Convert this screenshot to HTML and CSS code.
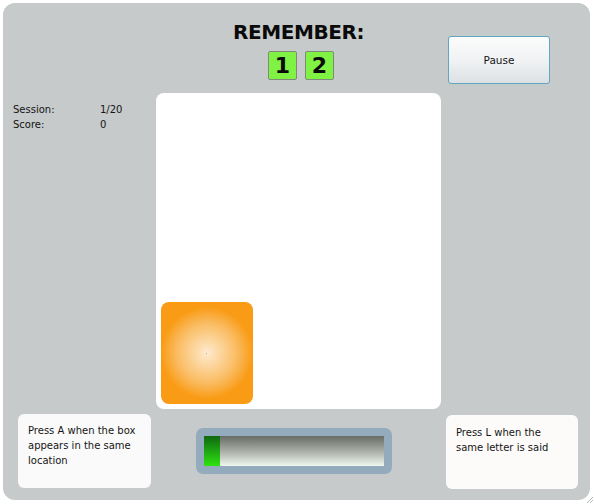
FILE: index.html
```html
<!DOCTYPE html>
<html>
<head>
<meta charset="utf-8">
<link rel="stylesheet" href="styles.css">
</head>
<body>
<div class="panel">
  <div class="left-head"></div>
  <div class="center-head">
    <div class="title">REMEMBER:</div>
    <div class="numbers">
      <div class="num">1</div>
      <div class="num">2</div>
    </div>
  </div>
  <div class="right-head">
    <button class="pause">Pause</button>
  </div>

  <div class="stats">
    <div class="stat"><span class="stat-label">Session:</span><span>1/20</span></div>
    <div class="stat"><span class="stat-label">Score:</span><span>0</span></div>
  </div>
  <div class="board">
    <div class="cell-active"><span class="dot"></span></div>
  </div>
  <div class="right-mid"></div>

  <div class="foot-left">
    <div class="hint hint-a">Press A when the box appears in the same location</div>
  </div>
  <div class="foot-center">
    <div class="meter">
      <div class="meter-track">
        <div class="meter-fill"></div>
      </div>
    </div>
  </div>
  <div class="foot-right">
    <div class="hint hint-l">Press L when the same letter is said</div>
  </div>
</div>
<svg class="grip" width="8" height="8" viewBox="0 0 8 8">
  <path d="M7 1 L1 7 M7 4 L4 7" stroke="#a0a4a6" stroke-width="0.8" fill="none"/>
</svg>
</body>
</html>
```

FILE: styles.css
```css
html, body {
  margin: 0;
  padding: 0;
  background: #ffffff;
}

body {
  font-family: "DejaVu Sans", Verdana, sans-serif;
  color: #151515;
  width: 594px;
  height: 504px;
  overflow: hidden;
}

.panel {
  margin: 3px;
  width: 587px;
  height: 497px;
  background: #c6cacb;
  border-radius: 12px;
  display: grid;
  grid-template-columns: 153px 285px 149px;
  grid-template-rows: 90px 316px 91px;
}

.center-head {
  display: flex;
  flex-direction: column;
  align-items: center;
  padding-top: 17px;
}

.title {
  font-weight: bold;
  font-size: 20px;
  line-height: 24px;
  letter-spacing: -0.4px;
  color: #0a0a0a;
}

.numbers {
  display: flex;
  gap: 8px;
  margin-top: 7px;
  padding-left: 5px;
}

.num {
  width: 27px;
  height: 27px;
  border: 1px solid #7f8a7a;
  border-radius: 2px;
  background: #80f243;
  font-weight: bold;
  font-size: 22px;
  line-height: 27px;
  text-align: center;
  color: #0a0a0a;
}

.right-head {
  padding-top: 33px;
  padding-left: 7px;
}

.pause {
  width: 102px;
  height: 48px;
  border: 1px solid #5ea9bf;
  border-radius: 3px;
  background: linear-gradient(to bottom, #fcfcfc 0%, #f0f2f3 50%, #dde1e4 100%);
  font-family: "DejaVu Sans", Verdana, sans-serif;
  font-size: 10.5px;
  color: #151515;
  padding: 0;
  margin: 0;
}

.stats {
  padding-top: 9px;
  padding-left: 10px;
  font-size: 10px;
  line-height: 15px;
}

.stat {
  display: flex;
}

.stat-label {
  width: 87px;
}

.board {
  background: #ffffff;
  border-radius: 8px;
  padding: 5px;
  display: grid;
  grid-template-columns: repeat(3, 1fr);
  grid-template-rows: repeat(3, 1fr);
}

.cell-active {
  grid-column: 1;
  grid-row: 3;
  border-radius: 8px;
  background: radial-gradient(circle closest-side, #fdeacf 0%, #fcd59c 30%, #fabc62 65%, #f99b14 100%);
  display: flex;
  align-items: center;
  justify-content: center;
}

.dot {
  width: 1px;
  height: 1px;
  background: #b0aaa2;
}

.hint {
  font-size: 10px;
  line-height: 15px;
  border-radius: 6px;
  box-sizing: border-box;
  height: 74px;
  color: #151515;
}

.hint-a {
  margin-top: 5px;
  margin-left: 15px;
  width: 133px;
  background: #fafafa;
  padding: 9px 10px 0 10px;
}

.hint-l {
  margin-top: 6px;
  margin-left: 5px;
  width: 132px;
  background: #fcfbfa;
  padding: 10px 10px 0 10px;
}

.foot-center {
  padding-top: 19px;
  padding-left: 40px;
}

.meter {
  width: 196px;
  height: 46px;
  box-sizing: border-box;
  padding: 8px;
  background: #94abbe;
  border-radius: 7px;
}

.meter-track {
  height: 30px;
  background: linear-gradient(to bottom, #676c65 0%, #a9ada5 50%, #f0f8ee 100%);
  display: flex;
}

.meter-fill {
  width: 16px;
  background: linear-gradient(to bottom, #0f680f 0%, #1fa513 50%, #30e210 100%);
}

.grip {
  position: absolute;
  left: 586px;
  top: 496px;
}
```
